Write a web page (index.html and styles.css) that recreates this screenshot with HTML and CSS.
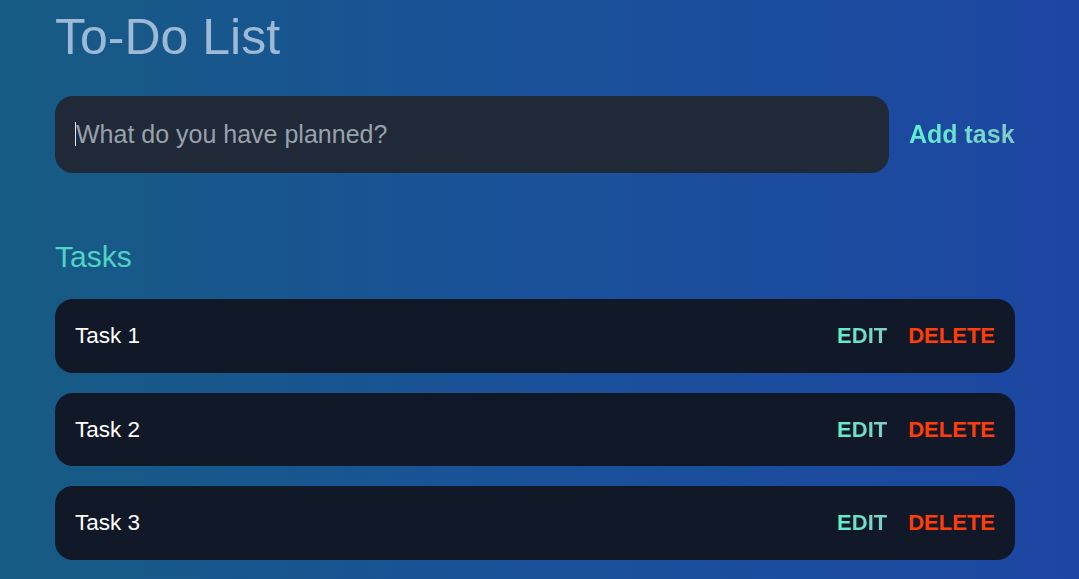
FILE: index.html
```html
<!DOCTYPE html>
<html lang="en">
<head>
<meta charset="utf-8">
<title>To-Do List</title>
<link rel="stylesheet" href="styles.css">
</head>
<body>
  <main class="app">
    <h1 class="title">To-Do List</h1>
    <form class="add-row">
      <div class="input-box"><span class="caret"></span><input class="task-input" type="text" placeholder="What do you have planned?"></div>
      <button class="add-btn" type="button">Add task</button>
    </form>
    <h2 class="section-title">Tasks</h2>
    <ul class="task-list">
      <li class="task">
        <span class="task-name">Task 1</span>
        <div class="actions"><button class="edit" type="button">EDIT</button><button class="delete" type="button">DELETE</button></div>
      </li>
      <li class="task">
        <span class="task-name">Task 2</span>
        <div class="actions"><button class="edit" type="button">EDIT</button><button class="delete" type="button">DELETE</button></div>
      </li>
      <li class="task">
        <span class="task-name">Task 3</span>
        <div class="actions"><button class="edit" type="button">EDIT</button><button class="delete" type="button">DELETE</button></div>
      </li>
    </ul>
  </main>
</body>
</html>
```

FILE: styles.css
```css
html, body {
  margin: 0;
  height: 100%;
}
body {
  font-family: "Liberation Sans", Arial, sans-serif;
  background: linear-gradient(to right, #165b83 0%, #1a519a 50%, #1d46a2 100%);
  overflow: hidden;
}
.app {
  width: 960px;
  margin-left: 55px;
  padding-top: 9px;
}
.title {
  margin: 0;
  font-size: 50px;
  font-weight: 400;
  line-height: 57px;
  color: #9db9d6;
}
.add-row {
  margin: 30px 0 0;
  display: flex;
  align-items: center;
  gap: 20px;
}
.input-box {
  position: relative;
  width: 834px;
  height: 77px;
  background: #1f2937;
  border-radius: 18px;
  display: flex;
  align-items: center;
}
.caret {
  position: absolute;
  left: 20px;
  top: 26px;
  width: 1px;
  height: 24px;
  background: #e5e7eb;
}
.task-input {
  width: 100%;
  box-sizing: border-box;
  padding: 0 20px 0 21px;
  border: 0;
  background: transparent;
  outline: none;
  font-family: inherit;
  font-size: 25px;
  color: #e5e7eb;
}
.task-input::placeholder {
  color: #9aa1ad;
}
.add-btn {
  border: 0;
  background: linear-gradient(to right, #5ef0d2, #7fcdc4);
  -webkit-background-clip: text;
  background-clip: text;
  color: transparent;
  font-family: inherit;
  font-size: 25px;
  font-weight: 700;
  padding: 0;
  cursor: pointer;
}
.section-title {
  margin: 67px 0 0;
  font-size: 30px;
  font-weight: 400;
  line-height: 34px;
  color: #4fd3c4;
}
.task-list {
  list-style: none;
  margin: 25px 0 0;
  padding: 0;
  display: flex;
  flex-direction: column;
  gap: 20px;
}
.task {
  display: flex;
  justify-content: space-between;
  align-items: center;
  padding: 24px 20px;
  background: #111827;
  border-radius: 18px;
  line-height: 25.5px;
}
.task-name {
  font-size: 22.5px;
  color: #ffffff;
}
.actions {
  display: flex;
  gap: 21px;
}
.actions button {
  border: 0;
  padding: 0;
  background: none;
  font-family: inherit;
  font-size: 22px;
  font-weight: 700;
  line-height: inherit;
  cursor: pointer;
}
.edit {
  background: linear-gradient(to right, #5ef0d2, #7fcdc4) !important;
  -webkit-background-clip: text !important;
  background-clip: text !important;
  color: transparent;
}
.delete {
  color: #ff3d0a;
}
```
